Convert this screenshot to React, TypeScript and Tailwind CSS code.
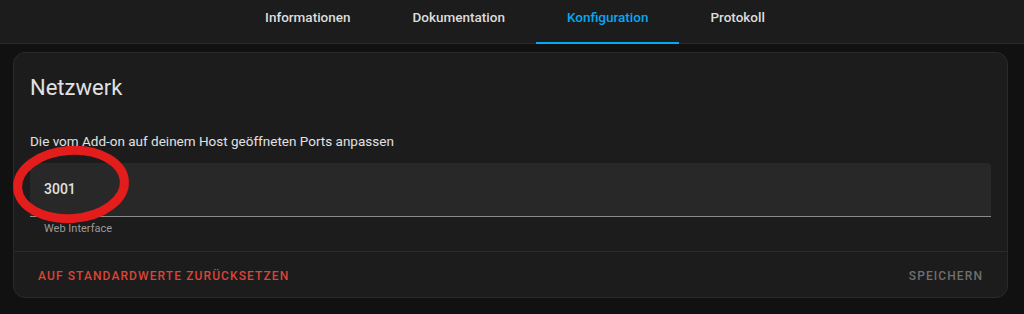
import React from 'react';

const tabs = ['Informationen', 'Dokumentation', 'Konfiguration', 'Protokoll'];

const App = () => {
  return (
    <div className="relative w-[1024px] h-[314px] overflow-hidden bg-[#111111] font-['Roboto',sans-serif]">
      <header className="flex h-[44px] justify-center border-b border-[#2b2b2b] bg-[#1c1c1c] pl-[6px]">
        {tabs.map((t) => (
          <div
            key={t}
            className={
              t === 'Konfiguration'
                ? 'relative flex h-full items-start px-[31px] pt-[7px] text-[13.5px] font-medium leading-5 text-[#03a9f4]'
                : 'relative flex h-full items-start px-[31px] pt-[7px] text-[13.5px] font-medium leading-5 text-[#dcdcdc]'
            }
          >
            {t}
            {t === 'Konfiguration' && <span className="absolute bottom-[-1px] left-0 right-0 h-[2px] bg-[#03a9f4]" />}
          </div>
        ))}
      </header>

      <div className="ml-[13px] mt-[8px] w-[995px] rounded-[12px] border border-[#2a2a2a] bg-[#1c1c1c]">
        <div className="px-4">
          <h1 className="pt-[19px] text-[22px] font-normal leading-8 text-[#e1e1e1]">Netzwerk</h1>
          <p className="mt-[27px] text-[13.5px] leading-5 text-[#e1e1e1]">Die vom Add-on auf deinem Host geöffneten Ports anpassen</p>
          <div className="mt-3 flex h-[54px] items-center rounded-t-[4px] border-b border-[#8c8c8c] bg-[#282828] pl-[14px] text-[14px] font-medium text-[#e1e1e1]">
            3001
          </div>
          <div className="mt-[4px] pl-[14px] text-[11px] leading-4 text-[#9b9b9b]">Web Interface</div>
        </div>
        <div className="mt-[14px] flex h-[46px] items-center justify-between border-t border-[#2a2a2a] px-2 pt-[2px]">
          <button className="px-4 text-[12px] font-medium uppercase tracking-[1.1px] text-[#db4437]">Auf Standardwerte zurücksetzen</button>
          <button className="px-4 text-[12px] font-medium uppercase tracking-[1.1px] text-[#6f6f6f]">Speichern</button>
        </div>
      </div>

      <svg className="absolute left-0 top-0" width="160" height="240" viewBox="0 0 160 240">
        <ellipse cx="71" cy="184.5" rx="53.5" ry="34" fill="none" stroke="#e31c1c" strokeWidth="9" transform="rotate(-4 71 184.5)" />
      </svg>
    </div>
  );
};

export default App;
